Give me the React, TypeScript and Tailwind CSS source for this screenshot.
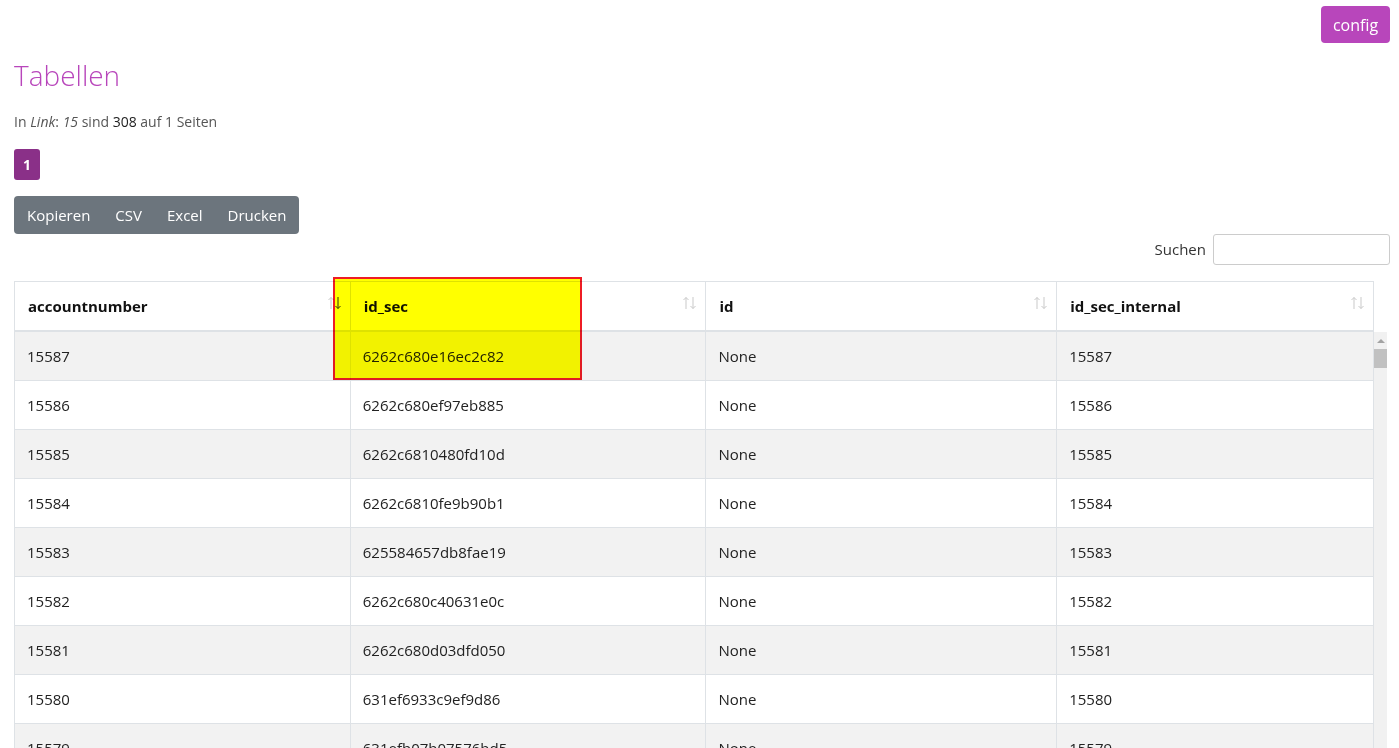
import React from 'react'

// ─── Data ────────────────────────────────────────────────────

const rows = [
    ['15587', '6262c680e16ec2c82', 'None', '15587'],
    ['15586', '6262c680ef97eb885', 'None', '15586'],
    ['15585', '6262c6810480fd10d', 'None', '15585'],
    ['15584', '6262c6810fe9b90b1', 'None', '15584'],
    ['15583', '625584657db8fae19', 'None', '15583'],
    ['15582', '6262c680c40631e0c', 'None', '15582'],
    ['15581', '6262c680d03dfd050', 'None', '15581'],
    ['15580', '631ef6933c9ef9d86', 'None', '15580'],
    ['15579', '631efb07b07576bd5', 'None', '15579'],
]

const cols = [
    { name: 'accountnumber', w: 'w-[336px]', sorted: true },
    { name: 'id_sec', w: 'w-[356px]', sorted: false },
    { name: 'id', w: 'w-[351px]', sorted: false },
    { name: 'id_sec_internal', w: 'w-[317px]', sorted: false },
]

// ─── Sort arrows ─────────────────────────────────────────────

function SortIcon({ sorted }: { sorted: boolean }) {
    return (
        <svg
            width="16"
            height="14"
            viewBox="0 0 16 14"
            className="absolute right-[7px] top-[14px]"
            fill="none"
            strokeWidth="1"
        >
            <g stroke="#c9c9c9">
                <path d="M4 13V1.5M1.5 4L4 1.5L6.5 4" />
            </g>
            <g stroke={sorted ? '#333' : '#c9c9c9'}>
                <path d="M11 1v11.5M8.5 10L11 12.5L13.5 10" />
            </g>
        </svg>
    )
}

export default function App() {
    return (
        <div
            className="relative w-[1399px] h-[748px] overflow-hidden bg-white text-[#212529]"
            style={{ fontFamily: '"Open Sans", "Noto Sans", sans-serif' }}
        >
            {/* ─── Top bar ─── */}
            <div className="flex justify-end pt-[6px] pr-[9px]">
                <button className="h-[37px] w-[69px] rounded-[4px] bg-[#b846bb] text-white text-[16px]">
                    config
                </button>
            </div>

            <div className="px-[14px]">
                <h1 className="mt-[18px] text-[28px] font-light leading-none text-[#b846bb]">Tabellen</h1>

                <p className="mt-[22px] text-[14px] text-[#555]">
                    In <i>Link</i>: <i>15</i> sind <span className="text-[#222]">308</span> auf 1 Seiten
                </p>

                <div className="mt-[17px] flex">
                    <span className="w-[26px] h-[31px] flex items-center justify-center rounded-[3px] bg-[#8a3088] text-white text-[14px] font-bold">
                        1
                    </span>
                </div>

                <div className="mt-[16px] inline-flex h-[38px] items-center rounded-[4px] bg-[#6c757d] text-white text-[15px]">
                    <span className="pl-[13px] pr-[12px]">Kopieren</span>
                    <span className="px-[13px]">CSV</span>
                    <span className="px-[12px]">Excel</span>
                    <span className="pl-[13px] pr-[13px]">Drucken</span>
                </div>

                {/* ─── Search ─── */}
                <div className="flex justify-end items-center gap-[7px] -mr-[5px]">
                    <label className="text-[15px] text-[#333]">Suchen</label>
                    <input className="w-[177px] h-[31px] border border-[#ccc] rounded-[3px] outline-none" />
                </div>

                {/* ─── Table ─── */}
                <div className="mt-[16px] w-[1360px] flex border-t border-l border-[#dee2e6]">
                    {cols.map((c) => (
                        <div
                            key={c.name}
                            className={`relative ${c.w} h-[50px] flex items-center pl-[13px] border-r border-b-2 border-[#dee2e6] font-bold text-[15px] text-[#111]`}
                        >
                            {c.name}
                            <SortIcon sorted={c.sorted} />
                        </div>
                    ))}
                </div>

                <div className="flex">
                    <div className="w-[1360px] border-l border-[#dee2e6]">
                        {rows.map((r, i) => (
                            <div key={i} className={`flex h-[49px] ${i % 2 === 0 ? 'bg-[#f2f2f2]' : 'bg-white'}`}>
                                {r.map((v, j) => (
                                    <div
                                        key={j}
                                        className={`${cols[j].w} flex items-center pl-[12px] border-r border-b border-[#dee2e6] text-[15px] text-[#222]`}
                                    >
                                        {v}
                                    </div>
                                ))}
                            </div>
                        ))}
                    </div>
                    {/* fake scrollbar */}
                    <div className="w-[17px] bg-[#f1f1f1] flex flex-col items-center pt-[7px]">
                        <span className="w-0 h-0 border-l-[4px] border-r-[4px] border-b-[4px] border-l-transparent border-r-transparent border-b-[#a3a3a3]" />
                        <span className="mt-[6px] w-[13px] h-[19px] bg-[#c1c1c1]" />
                    </div>
                </div>
            </div>

            {/* ─── Highlight overlay ─── */}
            <div className="absolute left-[333px] top-[277px] w-[249px] h-[103px] border-2 border-[#ee1c24] bg-[#ffff00] mix-blend-multiply" />
        </div>
    )
}
